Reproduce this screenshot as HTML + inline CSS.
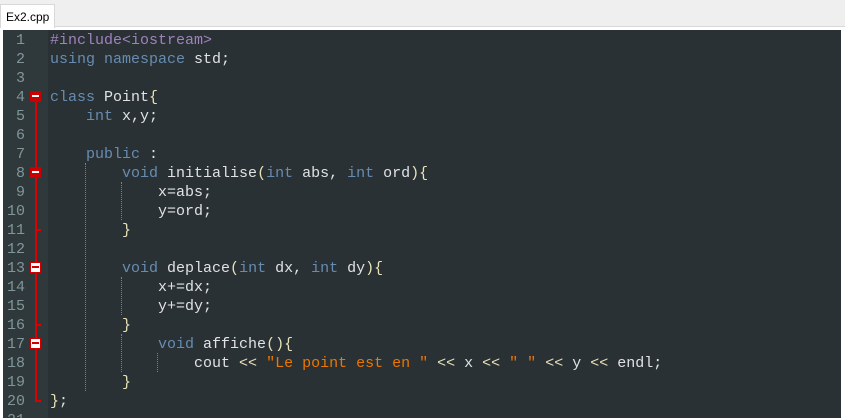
<!DOCTYPE html>
<html><head><meta charset="utf-8"><style>
*{margin:0;padding:0;box-sizing:border-box}
body{width:845px;height:418px;overflow:hidden;background:#fff;position:relative;font-family:"Liberation Mono",monospace}
.bar{position:absolute;left:0;top:0;width:845px;height:27px;background:#efefef;border-bottom:1px solid #d8d8d8}
.tab{position:absolute;left:0;top:4px;width:55px;height:24px;background:#fff;border:1px solid #d8d8d8;border-bottom:none;font:12px "Liberation Sans",sans-serif;color:#000;padding:5px 0 0 5px}
.ed{position:absolute;left:3px;top:30px;width:838px;height:388px;background:#293134;overflow:hidden}
.gut{position:absolute;left:0;top:0;width:45px;height:388px;background:#2f393c;z-index:0}
.ln{position:absolute;left:0;width:22px;text-align:right;color:#81969a;font-size:15px;line-height:19px;z-index:1}
.code{position:absolute;left:47px;font-size:15px;line-height:19px;white-space:pre;color:#e0e2e4;z-index:1}
.k{color:#678cb1}.p{color:#a082bd}.s{color:#ec7600}.o{color:#e8e2b7}
.fold{position:absolute;left:32px;width:0;border-left:2px solid #d00;z-index:3}
.box{position:absolute;left:27px;width:11px;height:11px;border:1px solid #c00;background:#fff;z-index:4}
.box i{position:absolute;left:1px;top:3px;width:7px;height:2px;background:#c00}
.red{background:#c00}.red i{background:#fff}
.tick{position:absolute;left:32px;width:6px;height:0;border-top:2px solid #d00;z-index:3}
.g{position:absolute;width:0;border-left:1px dotted #7a8285;z-index:1}
</style></head><body>
<div class="bar"><div class="tab">Ex2.cpp</div></div>
<div class="ed">
<div class="gut"></div>
<div class="fold" style="top:72px;height:300px"></div>
<div class="tick" style="top:199px"></div>
<div class="tick" style="top:294px"></div>
<div class="tick" style="top:370px"></div>
<div class="box red" style="top:61px"><i></i></div>
<div class="box red" style="top:137px"><i></i></div>
<div class="box" style="top:232px"><i></i></div>
<div class="box" style="top:308px"><i></i></div>
<div class="g" style="left:82px;top:133px;height:228px"></div>
<div class="g" style="left:118px;top:152px;height:38px"></div>
<div class="g" style="left:118px;top:247px;height:38px"></div>
<div class="g" style="left:118px;top:304px;height:38px"></div>
<div class="g" style="left:154px;top:323px;height:19px"></div>
<div class="ln" style="top:1px">1<br>2<br>3<br>4<br>5<br>6<br>7<br>8<br>9<br>10<br>11<br>12<br>13<br>14<br>15<br>16<br>17<br>18<br>19<br>20<br>21</div>
<div class="code" style="top:1px"><span class="p">#include&lt;iostream&gt;</span>
<span class="k">using namespace</span> std;

<span class="k">class</span> Point<span class="o">{</span>
    <span class="k">int</span> x,y;

    <span class="k">public</span> :
        <span class="k">void</span> initialise<span class="o">(</span><span class="k">int</span> abs, <span class="k">int</span> ord<span class="o">){</span>
            x=abs;
            y=ord;
        <span class="o">}</span>

        <span class="k">void</span> deplace<span class="o">(</span><span class="k">int</span> dx, <span class="k">int</span> dy<span class="o">){</span>
            x+=dx;
            y+=dy;
        <span class="o">}</span>
            <span class="k">void</span> affiche<span class="o">(){</span>
                cout <span class="o">&lt;&lt;</span> <span class="s">"Le point est en "</span> <span class="o">&lt;&lt;</span> x <span class="o">&lt;&lt;</span> <span class="s">" "</span> <span class="o">&lt;&lt;</span> y <span class="o">&lt;&lt;</span> endl;
        <span class="o">}</span>
<span class="o">}</span>;</div>
</div>
</body></html>
